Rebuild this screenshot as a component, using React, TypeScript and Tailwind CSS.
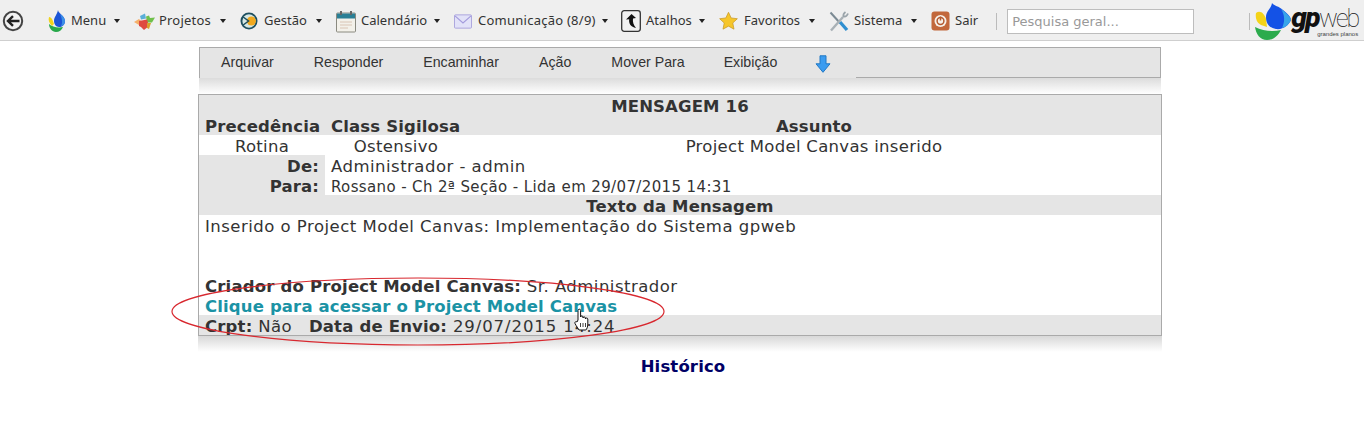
import React from "react";

const Caret = () => (
  <span className="h-0 w-0 border-x-[3.5px] border-t-[4px] border-x-transparent border-t-[#222]" />
);

const Back = () => (
  <svg width="22" height="22" viewBox="0 0 22 22" fill="none">
    <circle cx="11" cy="11" r="9.200" stroke="#444" strokeWidth="2" fill="#f2f2f2" />
    <path d="M17.500 11H6.500M11 6.200 6 11l5 4.800" stroke="#222" strokeWidth="2.400" />
  </svg>
);
const MenuLogo = () => (
  <svg width="18" height="22" viewBox="0 0 18 22">
    <path d="M1 7c3 0 4 4 5 7l-2 2C1 13 0 10 1 7z" fill="#f0d31c" />
    <path d="M1 14c3 3 9 4 14 3-1 3-4 5-7 5-4 0-7-4-7-8z" fill="#27a84a" />
    <path d="M10 0c0 3 7 6 7 11 0 4-3 6-6 6-3 0-5-3-5-6 0-4 3-6 4-11z" fill="#1b54d6" />
    <path d="M12 4c3 2 5 4 5 7 0 3-2 5-4 5 2-3 1-8-1-12z" fill="#3c8fe6" />
  </svg>
);
const Projetos = () => (
  <svg width="21" height="17" viewBox="0 0 21 17">
    <path d="M0 9l5-3 3 3-3 3z" fill="#f5b06a" />
    <path d="M6 3l5-2.500 1 5-5 1z" fill="#5aaed8" />
    <path d="M12 3.500l3-1 1 2.500 5-.500-3 5-5 0z" fill="#6fc04a" />
    <path d="M5 8l8-1.500 2 6.500-5 4-3-3-2-1z" fill="#df4a3f" />
    <path d="M13 10l4 0-2 6-2-1z" fill="#d9a02c" />
  </svg>
);
const Gestao = () => (
  <svg width="19" height="20" viewBox="0 0 19 20">
    <circle cx="9.500" cy="10" r="9" fill="#1d4f5f" />
    <circle cx="9.500" cy="10" r="7" fill="#d7e8e4" />
    <circle cx="12" cy="10" r="4.800" fill="#f0a81e" />
    <path d="M3 5.500l6 4.500-6 4.500" stroke="#1d4f5f" strokeWidth="1.600" fill="none" />
  </svg>
);
const Calendar = () => (
  <svg width="20" height="23" viewBox="0 0 20 23">
    <rect x="0.500" y="3" width="19" height="19" rx="1" fill="#f3f1ea" stroke="#8a8a80" />
    <rect x="1" y="3.500" width="18" height="5" fill="#2a7f95" />
    <rect x="4" y="1" width="2" height="4" fill="#666" />
    <rect x="14" y="1" width="2" height="4" fill="#666" />
    <path d="M4 12h12M4 15h12M4 18h8" stroke="#d9c4b4" />
  </svg>
);
const Mail = () => (
  <svg width="19" height="15" viewBox="0 0 19 15">
    <rect x="0.500" y="0.500" width="18" height="14" rx="1" fill="#e2e2f8" stroke="#a9a3dc" />
    <path d="M1 1.500 9.500 9 18 1.500" stroke="#a39bdc" fill="none" strokeWidth="1.200" />
  </svg>
);
const Atalhos = () => (
  <svg width="20" height="22" viewBox="0 0 20 22">
    <rect x="0.700" y="0.700" width="18.600" height="20.600" rx="2.500" fill="#f1f1f1" stroke="#333" strokeWidth="1.300" />
    <path d="M5 9.500 10.500 4 15 8l-3 .5C11.500 12 12.500 15 15 18 10 17 7.500 13.500 8.200 9.200z" fill="#111" />
  </svg>
);
const Star = () => (
  <svg width="20" height="20" viewBox="0 0 20 20">
    <path d="M10 .8l2.800 6 6.500.8-4.800 4.500 1.300 6.500L10 15.400l-5.800 3.200 1.300-6.500L.7 7.600l6.500-.8z" fill="#f6c62a" stroke="#c99a2a" strokeWidth=".8" />
  </svg>
);
const Tools = () => (
  <svg width="20" height="21" viewBox="0 0 20 21" fill="none">
    <path d="M1.500 1.500 11 12" stroke="#7b8a93" strokeWidth="2" />
    <path d="M11 11 18 19" stroke="#2f8fd0" strokeWidth="3.400" />
    <path d="M2 19.500 14 6" stroke="#a9b1b6" strokeWidth="2.400" />
    <path d="M19 2.500c-1 2.500-2.500 3.500-4.500 3-.5-2 .5-3.500 2-4.500" stroke="#9aa4aa" strokeWidth="1.800" />
  </svg>
);
const Sair = () => (
  <svg width="19" height="20" viewBox="0 0 19 20" fill="none">
    <rect x="0.500" y="0.500" width="18" height="19" rx="3" fill="#c2683c" />
    <circle cx="9.500" cy="10" r="6" fill="#f6f1ea" />
    <circle cx="9.500" cy="10" r="3.400" stroke="#b55a30" strokeWidth="1.500" />
    <path d="M9.500 5.500v4" stroke="#b55a30" strokeWidth="1.500" />
  </svg>
);
const Logo = () => (
  <svg width="36" height="37" viewBox="0 0 36 37">
    <path d="M1 10c4-3 8 0 10 6l1 8-6-2C2 20 0 15 1 10z" fill="#f4d318" />
    <path d="M0 24c8 4 18 5 26 3-3 6-8 10-14 10C5 37 1 31 0 24z" fill="#2cab4d" />
    <path d="M17 0c2 3 7 3 11 7 4 3 8 7 8 10-2 5-8 10-15 9-7-1-10-6-10-12 0-6 5-8 6-14z" fill="#1452e6" />
    <path d="M26 6c4 3 10 8 10 11-2 4-5 7-9 8 3-6 3-13-1-19z" fill="#37a5ea" />
  </svg>
);
const ArrowDown = () => (
  <svg width="16" height="18" viewBox="0 0 16 18">
    <path d="M5 .8h6v8h4l-7 8.500-7-8.500h4z" fill="#3b9cf0" stroke="#2278c4" strokeWidth="1" strokeLinejoin="round" />
  </svg>
);
const Hand = () => (
  <svg width="16" height="23" viewBox="0 0 16 23" className="absolute left-[574px] top-[308px]">
    <path d="M4 12V2.500a1.300 1.300 0 0 1 2.600 0V9c0-1.500 2.400-1.500 2.400 0v1c0-1.400 2.400-1.400 2.400 0v1c0-1.300 2.400-1.300 2.400 0v5c0 3-1 5-2 6H5c-1-2-2.500-3.500-4-6.500-.6-1.500 1-2.500 2-1.500z" fill="#fff" stroke="#111" strokeWidth="1" />
    <path d="M6.500 15v4M9 15v4M11.500 15v4" stroke="#111" strokeWidth=".8" />
  </svg>
);

const NavItem = ({ icon, label, iconBox, gap, width, caretEnd = "mr-[14px]" }: { icon: React.ReactNode; label: string; iconBox: string; gap: string; width: string; caretEnd?: string }) => (
  <div className={`flex items-center ${width}`}>
    <span className={`flex shrink-0 justify-center ${iconBox}`}>{icon}</span>
    <span className={gap}>{label}</span>
    <span className={`ml-auto flex ${caretEnd}`}><Caret /></span>
  </div>
);

const row = "h-[20px]";
const gray = "h-[20px] bg-[#e5e5e5]";
const bodyText = "tracking-[0.48px]";
const boldText = "font-bold tracking-[0.14px]";

export default function App() {
  return (
    <div className="relative h-[441px] w-[1364px] overflow-hidden bg-white">
      <header className="flex h-[41px] items-center border-b border-[#cfcfcf] bg-[#efefef] pt-[2px] font-['Noto_Sans',sans-serif] text-[13px] text-[#333]">
        <span className="ml-[2px] mr-[24px] flex"><Back /></span>
        <NavItem icon={<MenuLogo />} label="Menu" iconBox="w-[18px]" gap="ml-[5px]" width="w-[86px]" />
        <NavItem icon={<Projetos />} label="Projetos" iconBox="w-[21px]" gap="ml-[4px] tracking-[0.2px]" width="w-[106px]" />
        <NavItem icon={<Gestao />} label="Gestão" iconBox="w-[18px]" gap="ml-[6px]" width="w-[96px]" />
        <NavItem icon={<Calendar />} label="Calendário" iconBox="w-[20px]" gap="ml-[5px]" width="w-[118px]" />
        <NavItem icon={<Mail />} label="Comunicação (8/9)" iconBox="w-[18px]" gap="ml-[6px] tracking-[0.25px]" width="w-[167px]" caretEnd="mr-[13px]" />
        <NavItem icon={<Atalhos />} label="Atalhos" iconBox="w-[20px]" gap="ml-[5px]" width="w-[98px]" />
        <NavItem icon={<Star />} label="Favoritos" iconBox="w-[19px]" gap="ml-[6px]" width="w-[110px]" />
        <NavItem icon={<Tools />} label="Sistema" iconBox="w-[20px]" gap="ml-[5px]" width="w-[102px]" />
        <div className="flex items-center">
          <span className="flex w-[19px] justify-center"><Sair /></span>
          <span className="ml-[5px]">Sair</span>
        </div>
        <span className="ml-[18px] h-[17px] w-px bg-[#bbb]" />
        <input readOnly placeholder="Pesquisa geral..." className="ml-[10px] h-[25px] w-[187px] border border-[#bdbdbd] bg-white px-[4px] font-['DejaVu_Sans',sans-serif] text-[13px] placeholder:text-[#999]" />
        <span className="ml-[55px] h-[17px] w-px bg-[#bbb]" />
        <div className="ml-[5px] flex items-center">
          <Logo />
          <div className="relative -mt-[2px] w-[68px] whitespace-nowrap font-['Roboto',sans-serif] leading-[24px] text-[#111]">
            <span className="text-[28px] font-black italic tracking-[-1.5px]">gp</span><span className="text-[25px] font-thin tracking-[-2px]">web</span>
            <div className="absolute left-[26px] top-[25px] font-['Liberation_Sans',sans-serif] text-[6px] leading-[7px] text-[#444]">grandes planos</div>
          </div>
        </div>
      </header>

      <main className="ml-[198px] w-[964px] pt-[6px]">
        <div className="ml-px w-[962px]">
          <div className="flex h-[31px] border-x border-t border-[#aaa] bg-[#e5e5e5] font-['Liberation_Sans',sans-serif] text-[14.2px] text-[#333]">
            <nav className="flex h-[30px] w-[656px] items-center gap-[40px] pl-[21px]">
              <span>Arquivar</span>
              <span>Responder</span>
              <span>Encaminhar</span>
              <span>Ação</span>
              <span>Mover Para</span>
              <span className="-ml-px">Exibição</span>
              <span className="-ml-[2px] mt-[2px] flex"><ArrowDown /></span>
            </nav>
            <div className="h-[30px] flex-1 border-b border-[#aaa]" />
          </div>
          <div className="h-[16px] bg-linear-to-b from-[#dcdcdc] to-white" />
        </div>

        <section className="w-[964px] border border-[#aaa] font-['DejaVu_Sans',sans-serif] text-[16.5px] leading-[24px] text-[#333]">
          <div className={`${gray} text-center ${boldText}`}>MENSAGEM 16</div>
          <div className="grid grid-cols-[126px_142px_1fr]">
            <div className={`${gray} pl-[6px] ${boldText}`}>Precedência</div>
            <div className={`${gray} pl-[6px] ${boldText}`}>Class Sigilosa</div>
            <div className={`${gray} text-center ${boldText}`}>Assunto</div>
            <div className={`${row} text-center tracking-[0.3px]`}>Rotina</div>
            <div className={`${row} text-center tracking-[0.3px]`}>Ostensivo</div>
            <div className={`${row} text-center tracking-[0.3px]`}>Project Model Canvas inserido</div>
          </div>
          <div className="grid grid-cols-[126px_1fr]">
            <div className={`${gray} pr-[6px] text-right ${boldText}`}>De:</div>
            <div className={`${row} pl-[6px] ${bodyText}`}>Administrador - admin</div>
            <div className={`${gray} pr-[6px] text-right ${boldText}`}>Para:</div>
            <div className={`${row} pl-[6px] text-[15px] tracking-[0.37px]`}>Rossano - Ch 2ª Seção - Lida em 29/07/2015 14:31</div>
          </div>
          <div className={`${gray} text-center ${boldText}`}>Texto da Mensagem</div>
          <div className="flex h-[100px] flex-col px-[6px]">
            <div className={`${row} ${bodyText}`}>Inserido o Project Model Canvas: Implementação do Sistema gpweb</div>
            <div className={`${row} mt-[40px] ${bodyText}`}><b className="tracking-[0.18px]">Criador do Project Model Canvas:</b> Sr. Administrador</div>
            <div className={`${row} ${boldText} text-[#1b93a5]`}>Clique para acessar o Project Model Canvas</div>
          </div>
          <div className={`${gray} px-[6px] ${bodyText}`}>
            <b className="tracking-[0.18px]">Crpt:</b> Não <b className="ml-[11px] tracking-[0.18px]">Data de Envio:</b> <span className="tracking-[0.92px]">29/07/2015 14:24</span>
          </div>
        </section>
        <div className="h-[16px] bg-linear-to-b from-[#d8d8d8] to-white" />
        <div className={`mt-[4px] pl-[6px] text-center font-['DejaVu_Sans',sans-serif] text-[16.5px] leading-[22px] text-[#000066] ${boldText}`}>Histórico</div>
      </main>

      <svg width="500" height="72" viewBox="0 0 500 72" className="absolute left-[170px] top-[277px]" fill="none">
        <ellipse cx="248" cy="34.500" rx="246" ry="33.500" stroke="#d8282f" strokeWidth="1.200" />
      </svg>
      <Hand />
    </div>
  );
}
